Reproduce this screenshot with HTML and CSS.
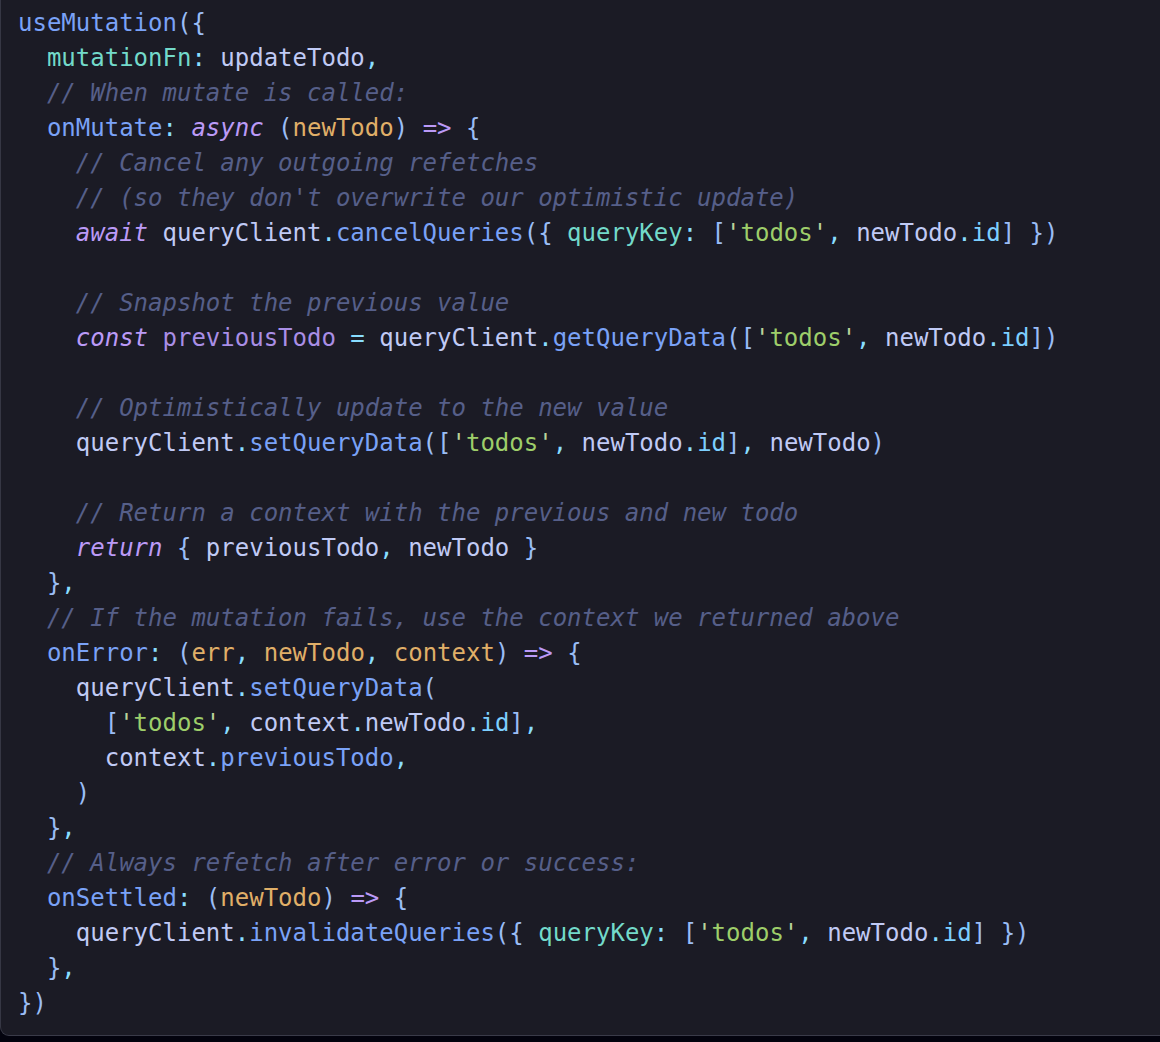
FILE: index.html
```html
<!DOCTYPE html>
<html lang="en">
<head>
<meta charset="utf-8">
<title>useMutation optimistic update</title>
<link rel="stylesheet" href="styles.css">
</head>
<body>
<div class="codebox">
<pre class="code"><code><span class="f">useMutation</span><span class="p">({</span>
  <span class="k">mutationFn</span><span class="o">:</span> <span class="v">updateTodo</span><span class="o">,</span>
  <span class="c">// When mutate is called:</span>
  <span class="f">onMutate</span><span class="o">:</span> <span class="kw">async</span> <span class="p">(</span><span class="pa">newTodo</span><span class="p">)</span> <span class="ar">=&gt;</span> <span class="p">{</span>
    <span class="c">// Cancel any outgoing refetches</span>
    <span class="c">// (so they don't overwrite our optimistic update)</span>
    <span class="kw">await</span> <span class="v">queryClient</span><span class="o">.</span><span class="f">cancelQueries</span><span class="p">({</span> <span class="k">queryKey</span><span class="o">:</span> <span class="p">[</span><span class="q">'</span><span class="s">todos</span><span class="q">'</span><span class="o">,</span> <span class="v">newTodo</span><span class="o">.</span><span class="pr">id</span><span class="p">]</span> <span class="p">})</span>

    <span class="c">// Snapshot the previous value</span>
    <span class="kw">const</span> <span class="cn">previousTodo</span> <span class="o">=</span> <span class="v">queryClient</span><span class="o">.</span><span class="f">getQueryData</span><span class="p">([</span><span class="q">'</span><span class="s">todos</span><span class="q">'</span><span class="o">,</span> <span class="v">newTodo</span><span class="o">.</span><span class="pr">id</span><span class="p">])</span>

    <span class="c">// Optimistically update to the new value</span>
    <span class="v">queryClient</span><span class="o">.</span><span class="f">setQueryData</span><span class="p">([</span><span class="q">'</span><span class="s">todos</span><span class="q">'</span><span class="o">,</span> <span class="v">newTodo</span><span class="o">.</span><span class="pr">id</span><span class="p">]</span><span class="o">,</span> <span class="v">newTodo</span><span class="p">)</span>

    <span class="c">// Return a context with the previous and new todo</span>
    <span class="kw">return</span> <span class="p">{</span> <span class="v">previousTodo</span><span class="o">,</span> <span class="v">newTodo</span> <span class="p">}</span>
  <span class="p">}</span><span class="o">,</span>
  <span class="c">// If the mutation fails, use the context we returned above</span>
  <span class="f">onError</span><span class="o">:</span> <span class="p">(</span><span class="pa">err</span><span class="o">,</span> <span class="pa">newTodo</span><span class="o">,</span> <span class="pa">context</span><span class="p">)</span> <span class="ar">=&gt;</span> <span class="p">{</span>
    <span class="v">queryClient</span><span class="o">.</span><span class="f">setQueryData</span><span class="p">(</span>
      <span class="p">[</span><span class="q">'</span><span class="s">todos</span><span class="q">'</span><span class="o">,</span> <span class="v">context</span><span class="o">.</span><span class="v">newTodo</span><span class="o">.</span><span class="pr">id</span><span class="p">]</span><span class="o">,</span>
      <span class="v">context</span><span class="o">.</span><span class="f">previousTodo</span><span class="o">,</span>
    <span class="p">)</span>
  <span class="p">}</span><span class="o">,</span>
  <span class="c">// Always refetch after error or success:</span>
  <span class="f">onSettled</span><span class="o">:</span> <span class="p">(</span><span class="pa">newTodo</span><span class="p">)</span> <span class="ar">=&gt;</span> <span class="p">{</span>
    <span class="v">queryClient</span><span class="o">.</span><span class="f">invalidateQueries</span><span class="p">({</span> <span class="k">queryKey</span><span class="o">:</span> <span class="p">[</span><span class="q">'</span><span class="s">todos</span><span class="q">'</span><span class="o">,</span> <span class="v">newTodo</span><span class="o">.</span><span class="pr">id</span><span class="p">]</span> <span class="p">})</span>
  <span class="p">}</span><span class="o">,</span>
<span class="p">})</span></code></pre>
</div>
</body>
</html>
```

FILE: styles.css
```css
html, body {
  margin: 0;
  padding: 0;
  background: #03030e;
  overflow: hidden;
}

.codebox {
  box-sizing: border-box;
  width: 1200px;
  height: 1036px;
  background: #1b1b25;
  border-left: 1px solid #363744;
  border-bottom: 1px solid #3a3b49;
  border-bottom-left-radius: 9px;
}

.code {
  margin: 0;
  padding: 6px 0 0 17px;
  font-family: "DejaVu Sans Mono", "Liberation Mono", monospace;
  font-size: 24px;
  line-height: 35px;
  color: #c0caf5;
  white-space: pre;
}

.f  { color: #7aa2f7; }
.k  { color: #73daca; }
.c  { color: #565f89; font-style: italic; }
.kw { color: #bb9af7; font-style: italic; }
.p  { color: #9abdf5; }
.o  { color: #89ddff; }
.v  { color: #c0caf5; }
.pa { color: #e0af68; }
.s  { color: #9ece6a; }
.q  { color: #b9d39a; }
.pr { color: #7dcfff; }
.cn { color: #a98ee6; }
.ar { color: #bb9af7; }
```
